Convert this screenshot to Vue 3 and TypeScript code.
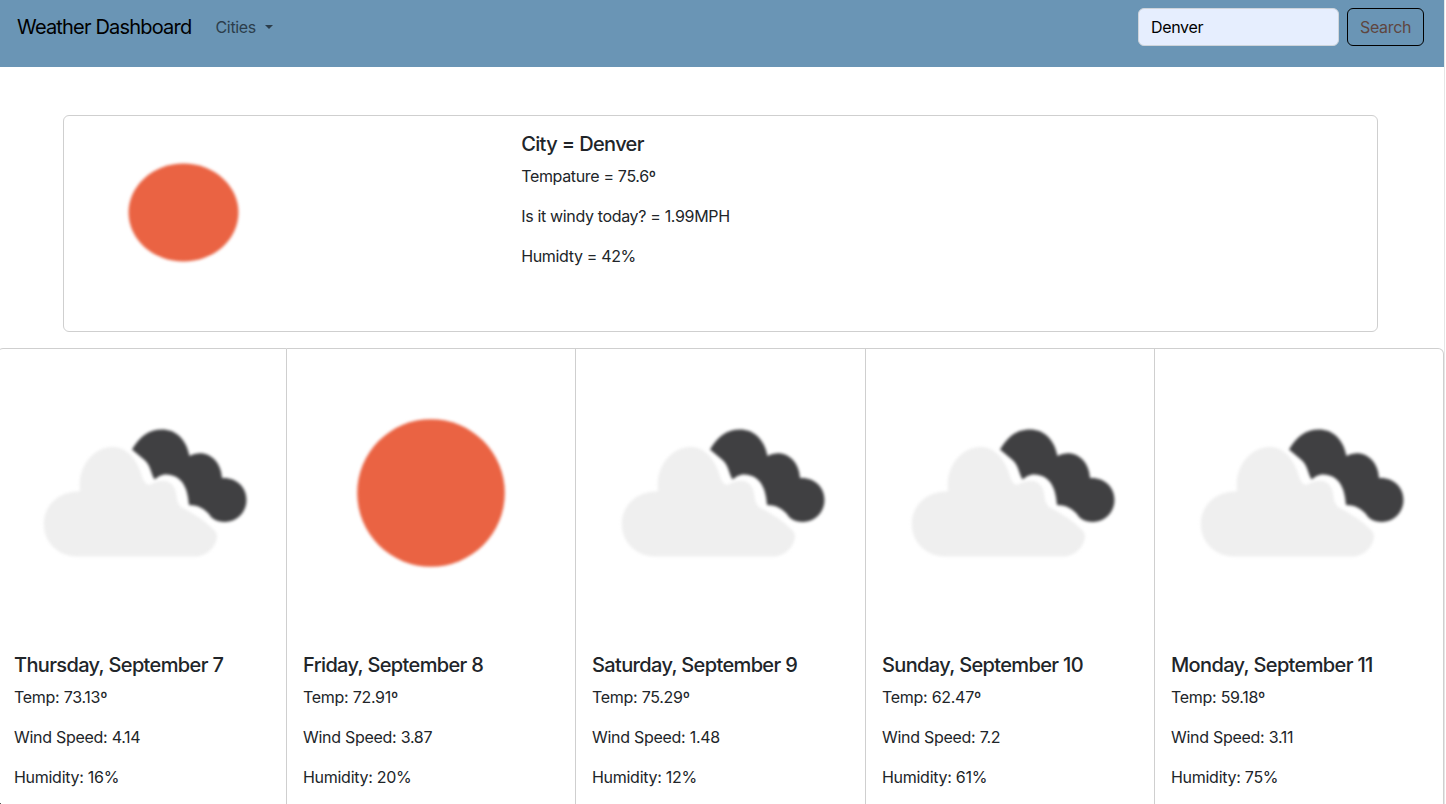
<script setup lang="ts">
import { ref } from 'vue'

type Sky = 'sun' | 'clouds'

interface Forecast {
  date: string
  sky: Sky
  temp: string
  wind: string
  humidity: string
}

const query = ref('Denver')

const days: Forecast[] = [
  { date: 'Thursday, September 7', sky: 'clouds', temp: '73.13', wind: '4.14', humidity: '16' },
  { date: 'Friday, September 8', sky: 'sun', temp: '72.91', wind: '3.87', humidity: '20' },
  { date: 'Saturday, September 9', sky: 'clouds', temp: '75.29', wind: '1.48', humidity: '12' },
  { date: 'Sunday, September 10', sky: 'clouds', temp: '62.47', wind: '7.2', humidity: '61' },
  { date: 'Monday, September 11', sky: 'clouds', temp: '59.18', wind: '3.11', humidity: '75' },
]
</script>

<template>
  <div class="page">
    <nav class="navbar">
      <a class="brand">Weather Dashboard</a>
      <a class="cities">Cities<span class="caret"></span></a>
      <form class="search" @submit.prevent>
        <input v-model="query" type="text" aria-label="Search" />
        <button type="submit">Search</button>
      </form>
    </nav>

    <section class="current">
      <svg class="current-icon" viewBox="0 0 240 216" aria-hidden="true">
        <ellipse class="sun" cx="119.5" cy="97" rx="55.2" ry="49.2" />
      </svg>
      <div class="current-body">
        <h5>City = Denver</h5>
        <p>Tempature = 75.6º</p>
        <p>Is it windy today? = 1.99MPH</p>
        <p>Humidty = 42%</p>
      </div>
    </section>

    <section class="forecast">
      <article v-for="day in days" :key="day.date" class="day">
        <svg class="day-icon" viewBox="0 0 288 288" aria-hidden="true">
          <circle v-if="day.sky === 'sun'" class="sun" cx="144" cy="144" r="73.8" />
          <g v-else class="clouds" transform="translate(2 -349)">
            <path
              class="cloud-front"
              d="M77 556.5 C58 556.5 43.8 542 43.8 524 C43.8 505 59 491 80 491.5 C77 468 92 447 113 447 C125 447 136 457 141 473 C143 480 145 484 149 485 C156 481 168 477 174 487 C178 494 175 501 181 507 C190 512 198 516 205 522 C212 528 217 531 217 536 C217 546 207 556.5 195 556.5 Z"
            />
            <path
              class="cloud-back"
              d="M132 449.5 C140 436 149 429.5 162 429.5 C175 429.5 186 438 189.5 456 C205 448 221 459 222 478 C235 477 246.5 486 246.5 500 C246.5 512 237 522 225 522 C216 522 211 518 209 514 C204 509 199 505 189 505 C188 491 184 475 166 474.5 C161 474.5 158 477 154.5 479.5 C151 474 151 466 144.5 460 Z"
            />
          </g>
        </svg>
        <div class="day-body">
          <h5>{{ day.date }}</h5>
          <p>Temp: {{ day.temp }}º</p>
          <p>Wind Speed: {{ day.wind }}</p>
          <p>Humidity: {{ day.humidity }}%</p>
        </div>
      </article>
    </section>
    <span class="corner"></span>
  </div>
</template>

<style>
html,
body {
  overflow: hidden;
}
</style>

<style scoped>
.page {
  position: relative;
  box-sizing: border-box;
  width: 1445px;
  height: 804px;
  overflow: hidden;
  border-right: 1px solid #e6e6e6;
  background: #fff;
  color: #212529;
  font: 400 16px/24px Inter, 'Liberation Sans', sans-serif;
  letter-spacing: -0.34px;
}
.corner {
  position: absolute;
  left: 0;
  bottom: 0;
  width: 1px;
  height: 1px;
  background: #555;
}
.navbar {
  box-sizing: border-box;
  display: flex;
  align-items: flex-start;
  height: 67px;
  padding: 8px 20px 0 17px;
  background: #6a95b5;
}
.brand {
  margin-top: 4px;
  width: 190.5px;
  color: #000;
  font-size: 20px;
  line-height: 30px;
  letter-spacing: -0.81px;
  white-space: nowrap;
}
.cities {
  display: flex;
  align-items: center;
  margin: 7px 0 0 8px;
  color: #2c3e4c;
}
.caret {
  margin-left: 9px;
  border: 4.5px solid transparent;
  border-top-color: #2c3e4c;
  border-bottom: 0;
}
.search {
  display: flex;
  gap: 8px;
  margin-left: auto;
}
.search input,
.search button {
  box-sizing: border-box;
  height: 38px;
  padding: 6px 12px;
  border-radius: 6px;
  font: inherit;
  letter-spacing: inherit;
}
.search input {
  width: 201px;
  border: 1px solid #ced4da;
  background: #e6eefe;
  color: #000;
}
.search button {
  width: 77px;
  border: 1px solid #000;
  background: transparent;
  color: #5f4640;
}
.current {
  box-sizing: border-box;
  display: flex;
  width: 1315px;
  height: 217px;
  margin: 48px 0 16px 63px;
  border: 1px solid #cfcfcf;
  border-radius: 6px;
}
.current-icon {
  flex: none;
  width: 240px;
  height: 215px;
}
.current-body {
  margin-left: 217.2px;
  padding-top: 16px;
}
h5 {
  margin: 0 0 8px;
  font-size: 20px;
  font-weight: 500;
  line-height: 24px;
  letter-spacing: -0.64px;
  white-space: nowrap;
}
p {
  margin: 0 0 16px;
  white-space: nowrap;
}
.forecast {
  display: grid;
  grid-template-columns: 290px 289px 290px 289px 289px;
  width: 1447px;
  height: 480px;
  margin-left: -3px;
  box-sizing: border-box;
}
.day {
  box-sizing: border-box;
  border: 1px solid #cfcfcf;
  border-left-width: 0;
}
.day:first-child {
  border-left-width: 1px;
  border-top-left-radius: 6px;
}
.day:last-child {
  border-top-right-radius: 6px;
}
.day-icon {
  display: block;
  width: 288px;
  height: 288px;
}
.day-body {
  padding: 16px;
  letter-spacing: -0.28px;
}
.sun {
  fill: #ea6343;
  filter: blur(1.6px);
}
.clouds {
  filter: blur(1.5px);
}
.cloud-front {
  fill: #efefef;
}
.cloud-back {
  fill: #404042;
}
</style>
